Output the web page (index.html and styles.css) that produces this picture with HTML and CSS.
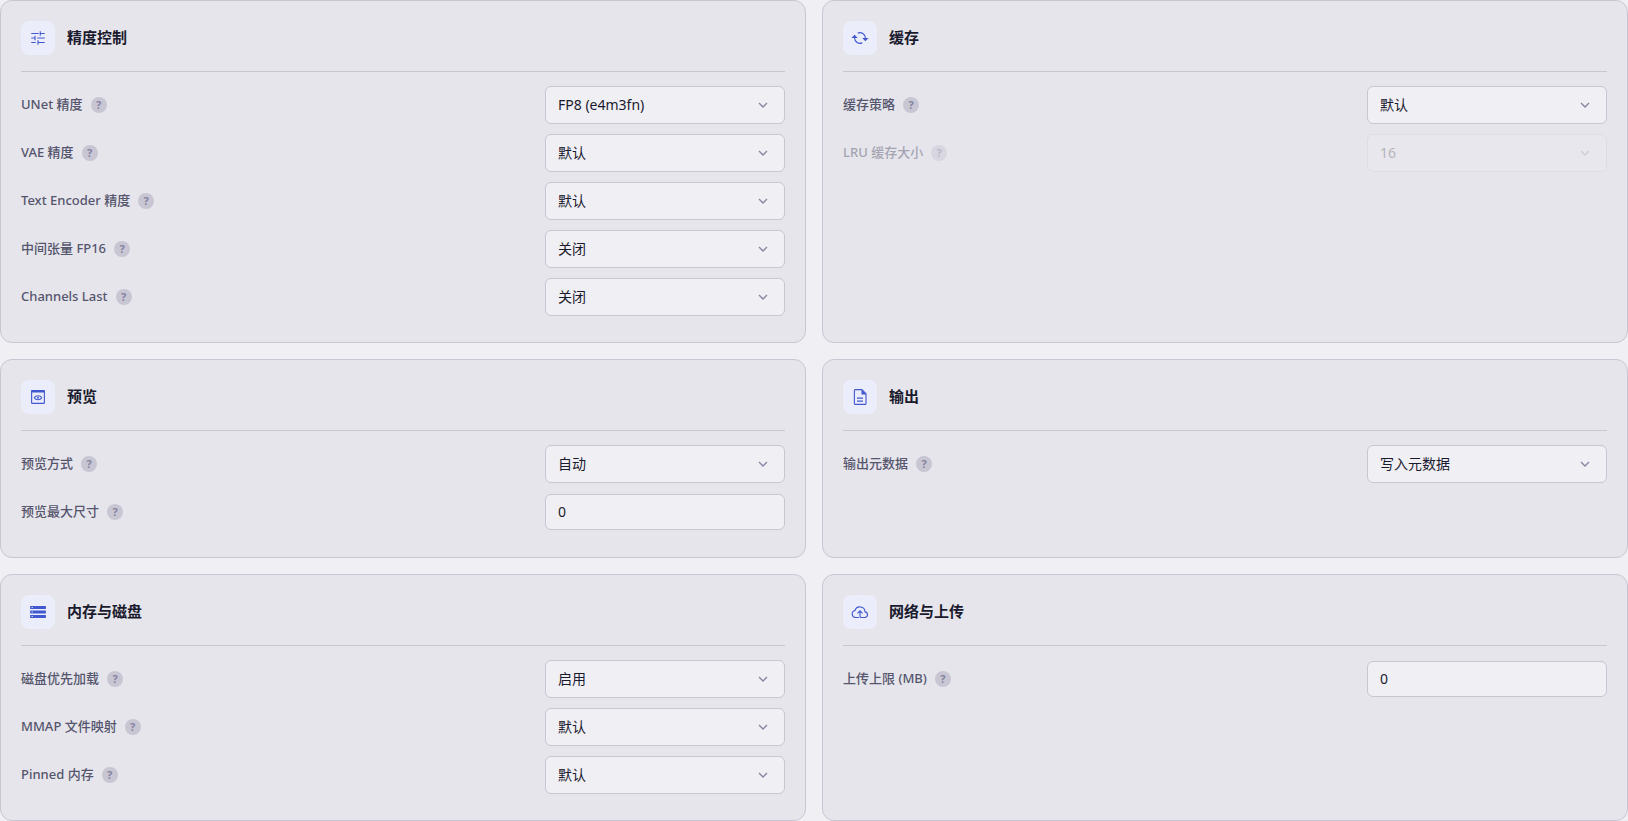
FILE: index.html
```html
<!DOCTYPE html>
<html lang="zh-CN">
<head>
    <meta charset="UTF-8">
    <meta name="viewport" content="width=device-width, initial-scale=1.0">
    <title>启动参数</title>
    <link rel="stylesheet" href="styles.css">
</head>
<body>
    <!-- Shared chevron -->
    <svg class="sprite" aria-hidden="true">
        <symbol id="chevron" viewBox="0 0 10 6"><path d="M1 1l4 4 4-4"/></symbol>
    </svg>

    <main class="settings">
        <!-- Precision -->
        <section class="card">
            <header class="card-header">
                <span class="card-icon">
                    <svg viewBox="0 0 24 24"><path d="M3 6h10M15 6h6M15 3v6M3 12h5M8 9v6M11 12h10M3 18h6M12 18h9M12 15v6"/></svg>
                </span>
                <h2>精度控制</h2>
            </header>
            <div class="row">
                <label for="unet">UNet 精度</label>
                <button class="help" type="button">?</button>
                <div class="select">
                    <select id="unet"><option>FP8 (e4m3fn)</option></select>
                    <svg><use href="#chevron"/></svg>
                </div>
            </div>
            <div class="row">
                <label for="vae">VAE 精度</label>
                <button class="help" type="button">?</button>
                <div class="select">
                    <select id="vae"><option>默认</option></select>
                    <svg><use href="#chevron"/></svg>
                </div>
            </div>
            <div class="row">
                <label for="textEncoder">Text Encoder 精度</label>
                <button class="help" type="button">?</button>
                <div class="select">
                    <select id="textEncoder"><option>默认</option></select>
                    <svg><use href="#chevron"/></svg>
                </div>
            </div>
            <div class="row">
                <label for="fp16">中间张量 FP16</label>
                <button class="help" type="button">?</button>
                <div class="select">
                    <select id="fp16"><option>关闭</option></select>
                    <svg><use href="#chevron"/></svg>
                </div>
            </div>
            <div class="row">
                <label for="channelsLast">Channels Last</label>
                <button class="help" type="button">?</button>
                <div class="select">
                    <select id="channelsLast"><option>关闭</option></select>
                    <svg><use href="#chevron"/></svg>
                </div>
            </div>
        </section>

        <!-- Cache -->
        <section class="card">
            <header class="card-header">
                <span class="card-icon">
                    <svg viewBox="0 0 24 24"><path d="M9 5.500A7.200 7.200 0 0 1 19.200 12v3M15 18.500A7.200 7.200 0 0 1 4.800 12V9"/><path class="solid" d="M15 12h8.400l-4.200 4.200zM.6 12H9L4.800 7.800z"/></svg>
                </span>
                <h2>缓存</h2>
            </header>
            <div class="row">
                <label for="cacheMode">缓存策略</label>
                <button class="help" type="button">?</button>
                <div class="select">
                    <select id="cacheMode"><option>默认</option></select>
                    <svg><use href="#chevron"/></svg>
                </div>
            </div>
            <div class="row disabled">
                <label for="lruSize">LRU 缓存大小</label>
                <button class="help" type="button">?</button>
                <div class="select">
                    <select id="lruSize" disabled><option>16</option></select>
                    <svg><use href="#chevron"/></svg>
                </div>
            </div>
        </section>

        <!-- Preview -->
        <section class="card">
            <header class="card-header">
                <span class="card-icon">
                    <svg viewBox="0 0 24 24"><rect x="3.500" y="3.500" width="17" height="17" rx="1"/><path class="solid" d="M3 3h18v3H3z"/><path d="M7 13c2-3.500 8-3.500 10 0-2 3.500-8 3.500-10 0z"/><circle class="solid" cx="12" cy="13" r="1.300"/></svg>
                </span>
                <h2>预览</h2>
            </header>
            <div class="row">
                <label for="previewMethod">预览方式</label>
                <button class="help" type="button">?</button>
                <div class="select">
                    <select id="previewMethod"><option>自动</option></select>
                    <svg><use href="#chevron"/></svg>
                </div>
            </div>
            <div class="row">
                <label for="previewSize">预览最大尺寸</label>
                <button class="help" type="button">?</button>
                <input type="text" inputmode="numeric" id="previewSize" value="0">
            </div>
        </section>

        <!-- Output -->
        <section class="card">
            <header class="card-header">
                <span class="card-icon">
                    <svg viewBox="0 0 24 24"><path d="M14.500 2.200H5.500a1 1 0 0 0-1 1v17.600a1 1 0 0 0 1 1h13.500a1 1 0 0 0 1-1V7.500zM8 13.500h8M8 17.500h8"/><path class="solid" d="M14 2v6.500h6.500z"/></svg>
                </span>
                <h2>输出</h2>
            </header>
            <div class="row">
                <label for="metadata">输出元数据</label>
                <button class="help" type="button">?</button>
                <div class="select">
                    <select id="metadata"><option>写入元数据</option></select>
                    <svg><use href="#chevron"/></svg>
                </div>
            </div>
        </section>

        <!-- Memory and disk -->
        <section class="card">
            <header class="card-header">
                <span class="card-icon">
                    <svg viewBox="0 0 24 24"><path class="solid" d="M1.500 20h21v-4h-21v4zm2-2.700h1.500v1.500H3.500v-1.500zM1.500 4v4h21V4h-21zM5 6.700H3.500V5.200H5v1.500zM1.500 14h21v-4h-21v4zm2-2.700h1.500v1.500H3.500v-1.500z"/></svg>
                </span>
                <h2>内存与磁盘</h2>
            </header>
            <div class="row">
                <label for="diskFirst">磁盘优先加载</label>
                <button class="help" type="button">?</button>
                <div class="select">
                    <select id="diskFirst"><option>启用</option></select>
                    <svg><use href="#chevron"/></svg>
                </div>
            </div>
            <div class="row">
                <label for="mmap">MMAP 文件映射</label>
                <button class="help" type="button">?</button>
                <div class="select">
                    <select id="mmap"><option>默认</option></select>
                    <svg><use href="#chevron"/></svg>
                </div>
            </div>
            <div class="row">
                <label for="pinned">Pinned 内存</label>
                <button class="help" type="button">?</button>
                <div class="select">
                    <select id="pinned"><option>默认</option></select>
                    <svg><use href="#chevron"/></svg>
                </div>
            </div>
        </section>

        <!-- Network and upload -->
        <section class="card">
            <header class="card-header">
                <span class="card-icon">
                    <svg viewBox="0 0 24 24"><path d="M10.500 19.300H6a4.700 4.700 0 0 1-.6-9.300 6.800 6.800 0 0 1 13.300 1.800 3.800 3.800 0 0 1 .2 7.500H13.300A1.300 1.300 0 0 1 12 18v-7.500M8.700 13.800l3.300-3.300 3.300 3.300"/></svg>
                </span>
                <h2>网络与上传</h2>
            </header>
            <div class="row">
                <label for="uploadLimit">上传上限 (MB)</label>
                <button class="help" type="button">?</button>
                <input type="text" inputmode="numeric" id="uploadLimit" value="0">
            </div>
        </section>
    </main>
</body>
</html>
```
FILE: styles.css
```css
* {
    box-sizing: border-box;
}

body {
    margin: 0;
    background-color: #f0eff4;
    color: #1a1a2e;
    font-family: "Noto Sans", "Noto Sans CJK SC", sans-serif;
    font-size: 14px;
}

.sprite {
    display: none;
}

.settings {
    display: grid;
    grid-template-columns: 1fr 1fr;
    gap: 16px;
}

.card {
    background-color: #e6e5eb;
    border: 1px solid #c8c6d3;
    border-radius: 12px;
    padding: 20px 20px 21px;
}

.card-header {
    display: flex;
    align-items: center;
    gap: 12px;
    padding-bottom: 16px;
    margin-bottom: 9px;
    border-bottom: 1px solid #c8c6d3;
}

.card-header h2 {
    margin: 0;
    padding-bottom: 2px;
    font-size: 15px;
    font-weight: 700;
    line-height: 22px;
}

.card-icon {
    display: flex;
    align-items: center;
    justify-content: center;
    width: 34px;
    height: 34px;
    border-radius: 8px;
    background-color: #ebeefa;
}

.card-icon svg {
    width: 18px;
    height: 18px;
    fill: none;
    stroke: #4158d0;
    stroke-width: 1.5;
}

.card-icon .solid {
    fill: #4158d0;
    stroke: none;
}

.row {
    display: flex;
    align-items: center;
    gap: 8px;
    min-height: 48px;
    padding: 5px 0;
}

label {
    padding-bottom: 2px;
    color: #55556d;
    font-size: 13px;
    font-weight: 500;
    line-height: 20px;
}

.help {
    width: 16px;
    height: 16px;
    padding: 0;
    border: none;
    border-radius: 50%;
    background-color: #c8c6d3;
    color: #8583a0;
    font-family: inherit;
    font-size: 11px;
    font-weight: 700;
    line-height: 16px;
    text-align: center;
    cursor: help;
}

.select {
    position: relative;
    margin-left: auto;
}

select,
input[type="text"] {
    width: 240px;
    height: 38px;
    padding: 0 12px 2px;
    border: 1px solid #c8c6d3;
    border-radius: 6px;
    background-color: #f0eff4;
    color: #1a1a2e;
    font-family: inherit;
    font-size: 14px;
}

select {
    display: block;
    appearance: none;
    cursor: pointer;
}

input[type="text"] {
    height: 36px;
    margin-left: auto;
}

.select svg {
    position: absolute;
    top: 16px;
    right: 17px;
    width: 10px;
    height: 6px;
    fill: none;
    stroke: #8583a0;
    stroke-width: 1.3;
    pointer-events: none;
}

.disabled label,
.disabled .help {
    opacity: 0.45;
}

.disabled .select {
    opacity: 0.25;
}

.disabled select {
    color: #1a1a2e;
    opacity: 1;
    cursor: not-allowed;
}
```
